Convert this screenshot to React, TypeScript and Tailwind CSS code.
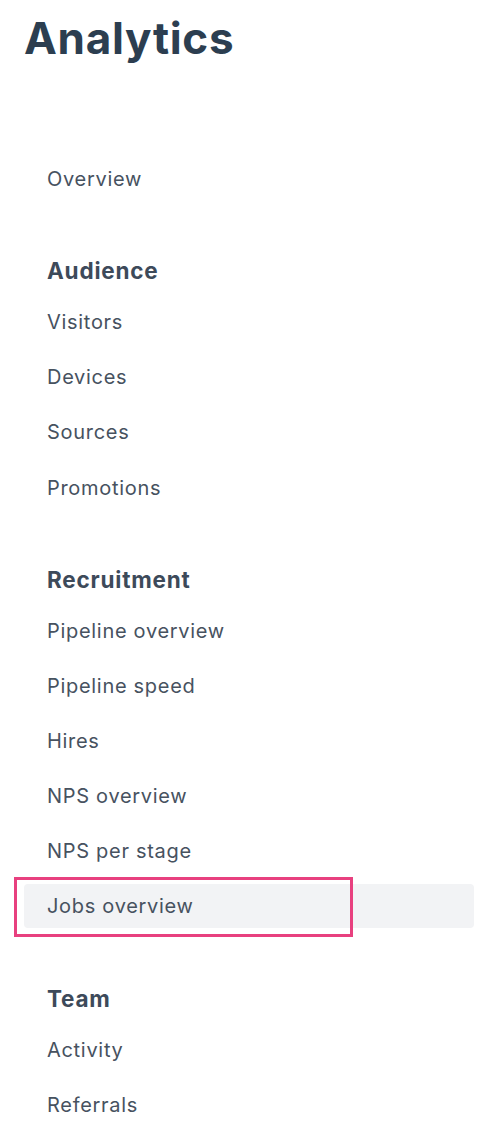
const sections: { title?: string; items: string[] }[] = [
  { items: ['Overview'] },
  { title: 'Audience', items: ['Visitors', 'Devices', 'Sources', 'Promotions'] },
  {
    title: 'Recruitment',
    items: ['Pipeline overview', 'Pipeline speed', 'Hires', 'NPS overview', 'NPS per stage', 'Jobs overview'],
  },
  { title: 'Team', items: ['Activity', 'Referrals'] },
];

const ACTIVE = 'Jobs overview';

export default function App() {
  return (
    <div className="min-h-[1142px] w-[500px] bg-white font-['Inter',sans-serif]">
      <h1 className="pl-[24px] pt-[12px] text-[44px] font-bold leading-[52px] tracking-[0.7px] text-[#2c3e50]">
        Analytics
      </h1>

      <nav className="mt-[93px] flex flex-col gap-[52px] pl-[24px] pr-[26px]">
        {sections.map((section, i) => (
          <div key={i} className="flex flex-col gap-[11.15px]">
            {section.title && (
              <div className="flex h-[36px] items-center pl-[23px] text-[22.5px] font-bold tracking-[0.8px] text-[#3d4a5a]">
                {section.title}
              </div>
            )}
            {section.items.map((item) => (
              <div key={item} className="relative">
                <a
                  href="#"
                  className={`flex h-[44px] items-center rounded-[4px] pl-[23px] text-[20px] tracking-[0.7px] text-[#47525f] ${
                    item === ACTIVE ? 'bg-[#f2f3f5]' : ''
                  }`}
                >
                  {item}
                </a>
                {item === ACTIVE && (
                  <div className="pointer-events-none absolute left-[-10px] top-[-7px] h-[60px] w-[339px] border-[3px] border-[#e8407f]" />
                )}
              </div>
            ))}
          </div>
        ))}
      </nav>
    </div>
  );
}
